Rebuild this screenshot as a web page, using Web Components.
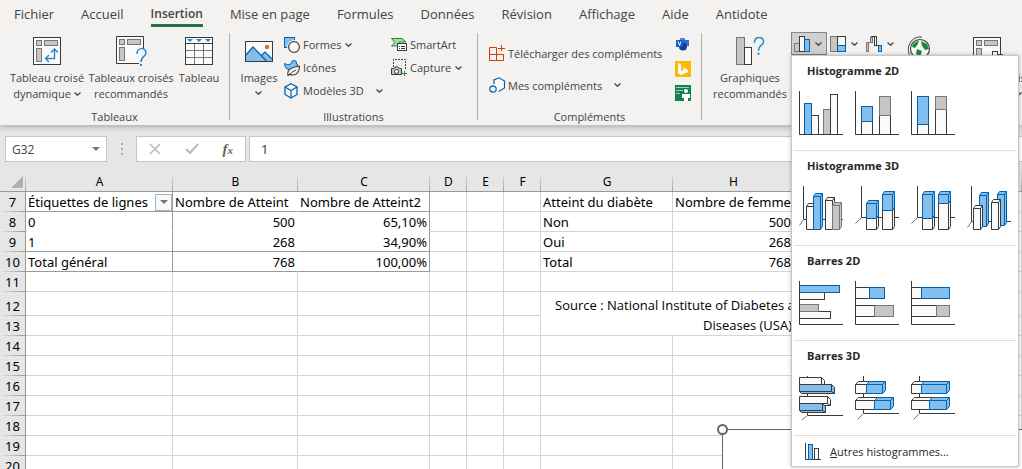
<!DOCTYPE html>
<html lang="fr">
<head>
<meta charset="utf-8">
<title>Classeur – Insertion</title>
<style>
html,body{margin:0;height:100%;overflow:hidden}
body{font-family:"Open Sans","Noto Sans",sans-serif;font-size:11px;color:#444;background:#e6e6e6}
</style>
</head>
<body>
<excel-app></excel-app>
<script>
/* ---------- icon drawing helpers ---------- */
const K = '#3a3a38', BL = '#0063b1', GY = '#797774';
const FILL = {b:['#83beec',BL], g:['#c8c6c4',GY], w:['#fafafa',K]};
const rect = (c,x,y,x2,y2) => `<rect x="${x}" y="${y}" width="${x2-x}" height="${y2-y}" fill="${FILL[c][0]}" stroke="${FILL[c][1]}"/>`;
const line = (d,s=K,w=1) => `<path d="${d}" fill="none" stroke="${s}" stroke-width="${w}"/>`;
/* upright or lying box seen from the front with its top and right faces */
const box = (c,x,y,x2,y2,dx,dy) => {
  const [f,s] = FILL[c];
  return `<path d="M${x} ${y}l${dx} ${-dy}H${x2+dx}V${y2-dy}L${x2} ${y2}H${x}Z" fill="${f}" stroke="${s}"/>` +
         `<path d="M${x} ${y}H${x2}V${y2}M${x2} ${y}l${dx} ${-dy}" fill="none" stroke="${s}"/>`;
};
/* lying box whose shaded edge drops to the lower right */
const slab = (c,x,y,x2,y2) => `<path d="M${x} ${y}H${x2}l3 3V${y2+2}H${x+2}L${x} ${y2}Z" fill="${c==='b'?'#83beec':'#fafafa'}" stroke="${K}"/><path d="M${x} ${y2}H${x2}V${y}M${x2} ${y2}l3 2" fill="none" stroke="${K}"/>`;
const axis = line('M.5 0V43.5H44');
const pivot = `<rect x=".5" y=".5" width="27" height="27" fill="#fafafa" stroke="${K}"/>` +
  rect('g',3.5,3.5,8.5,8.5) + rect('g',11.5,3.5,24.5,8.5) + rect('g',3.5,11.5,8.5,24.5);
const question = (x,y) => `<path d="M${x} ${y+5}C${x} ${y-2} ${x+9} ${y-2} ${x+9} ${y+4}C${x+9} ${y+8} ${x+4} ${y+7} ${x+4} ${y+13}" fill="none" stroke="#1e8bcd" stroke-width="1.5"/><rect x="${x+3}" y="${y+15}" width="2" height="2" fill="#1e8bcd"/>`;

const ICONS = {
  chevron:[7,4,line('M.5.5L3.5 3.2L6.5.5','#444',1.3)],
  arrow:[8,4,'<path d="M0 0H8L4 4Z" fill="#777"/>'],
  pivot:[28,28,pivot+line('M13 21.5H21.5V12M16 18L12.5 21.5L16 25M18 15.5L21.5 12L25 15.5','#1e8bcd',1.4)],
  pivotq:[31,30,`<path d="M27.5 12V.5H.5V27.5H23" fill="#fafafa" stroke="${K}"/>`+rect('g',3.5,3.5,8.5,8.5)+rect('g',11.5,3.5,24.5,8.5)+rect('g',3.5,11.5,8.5,24.5)+question(21,13)],
  table:[28,28,rect('w',.5,.5,27.5,27.5)+line('M.5 6.5H27.5')+line('M1 13.5H27M1 20.5H27M9.5 7V27M18.5 7V27',GY)+'<path d="M2 2H8L5 5ZM11 2H17L14 5ZM20 2H26L23 5Z" fill="#1e8bcd"/>'],
  image:[28,21,`<rect x=".5" y=".5" width="27" height="20" fill="#fafafa" stroke="${K}"/><path d="M1 14L8 6L21.500 20H1Z" fill="#83beec"/><path d="M16 15L20 11L27 18V20H21Z" fill="#83beec"/>`+line('M1 14L8 6L21.5 20M16 15L20 11L27 18',BL,1.2)+'<circle cx="22" cy="6" r="2.200" fill="#e8700a"/>'],
  shapes:[16,16,rect('b',.5,.5,10.5,10.5)+'<circle cx="10" cy="10" r="7" fill="#f3f2f1"/><circle cx="10" cy="10" r="5.400" fill="#fafafa" stroke="#444" stroke-width="1.200"/>'],
  icons:[16,16,`<path d="M.5 3.500Q4 6 7 4Q7 .5 10 .5Q13 .5 12.500 4L14 5Q12 7 10 8L5 10Q1 9 .5 3.500Z" fill="#83beec" stroke="${BL}"/><path d="M4 16Q3 10 7 8.500Q10 7 15.500 6Q15 15 9 15Q7 15 6 14Z" fill="#f3f2f1" stroke="#444" stroke-width="1.200"/>`+line('M4 16Q7 12 12 10','#444')],
  cube:[14,16,`<path d="M7 .8L13 4V11.500L7 15L1 11.500V4Z" fill="#fafafa" stroke="${BL}" stroke-width="1.300"/>`+line('M1 4L7 7.500L13 4M7 7.500V15',BL,1.2)],
  smartart:[16,13,`<path d="M.5.5H11L15 4H8V8H.5L4 4.500Z" fill="#a3dca9" stroke="#1d8a3a"/><rect x="6.500" y="5.500" width="9" height="7" fill="#fafafa" stroke="${K}"/>`+line('M8 8.500H9M10 8.500H14M8 10.500H9M10 10.500H14')],
  capture:[17,17,line('M2.5 8V.5H14.500V10','#444').replace('/>',' stroke-dasharray="2 1"/>')+`<path d="M.5 9.500H3L4 8H7L8 9.500H10.500V15.500H.5Z" fill="#c8c6c4" stroke="${K}"/><circle cx="5.500" cy="12.500" r="2" fill="#fafafa" stroke="${K}"/>`+line('M11 14.500H16M13.500 12V17','#1d8a3a')],
  addin:[16,16,line('M.5 2.500H7.500V15.500H.5ZM.5 9.500H14.500V15.500H.5M12.500 0V6M9 3.500H16','#d83b01')],
  myaddin:[17,17,`<path d="M9 .8L15.500 4V11L9.500 14.500L5 12V3Z" fill="#fafafa"/>`+line('M5 7V3L10 .8L15.500 4V11L9.500 14.500',BL,1.2)+`<circle cx="4" cy="12" r="3.200" fill="#f3f2f1" stroke="${BL}" stroke-width="1.200"/>`],
  visio:[16,14,'<rect x="5" y="1" width="5" height="5" fill="#3b8de0"/><path d="M8 3H14V9H8Z" fill="#2b6fd0"/><circle cx="8" cy="9.500" r="4" fill="#103f91"/><rect x="1" y="3" width="7" height="7" fill="#185abd"/><path d="M3 4.500L4.500 8.500L6 4.500" fill="none" stroke="#fff"/>'],
  bing:[16,16,'<rect width="16" height="16" fill="#ffb900"/><path d="M3 2L6 3V10L9 9L7 6L13 9V11L6 14L3 12Z" fill="#fff"/>'],
  people:[16,16,'<rect width="16" height="16" fill="#13804f"/><path d="M1 2.500H14M1 5.500H8M1 8.500H5" stroke="#9fd0b8" fill="none"/><circle cx="11" cy="6" r="2" fill="#fff"/><path d="M7 9H15V13H13V16H9V13H7Z" fill="#fff"/>'],
  reco:[29,28,rect('g',.5,.5,8.5,27.5)+rect('w',8.5,10.5,15.5,27.5)+question(18.5,.8)],
  column:[16,16,rect('g',.5,7.5,5.5,15.5)+rect('w',5.5,.5,10.5,15.5)+rect('b',10.5,3.5,15.5,15.5)],
  tree:[16,16,rect('g',.5,.5,7.5,15.5)+rect('w',7.5,.5,15.5,9.5)+rect('b',7.5,9.5,15.5,15.5)],
  waterfall:[16,16,rect('g',.5,6.5,2.5,15.5)+rect('g',4.5,1.5,6.5,6.5)+rect('w',8.5,.5,10.5,9.5)+rect('b',12.5,9.5,15.5,15.5)+line('M2.500 6.500H5',GY)+line('M5 .5H9M10 9.500H13')],
  globe:[24,24,'<circle cx="13" cy="13" r="9.500" fill="#fafafa" stroke="#444" stroke-width="1.200"/><path d="M6 8L12 4L11 8L8 12L5 11ZM14 5L20 8L22 13L18 14L15 10ZM10 13L15 15L13 21L9 18Z" fill="#1d8a3a"/><path d="M4 22Q-1 14 3 7T15 1" fill="none" stroke="#444"/>'],
  pivotchart:[30,28,pivot+rect('w',19.5,14.5,24.5,27.5)+rect('b',24.5,17.5,29.5,27.5)],
  cross:[12,12,line('M1 1L11 11M11 1L1 11','#bbb',1.6)],
  check:[14,12,line('M1 6L5 10L13 1','#bbb',2.2)],
  c2a:[44,44,rect('w',12.5,24.5,19.5,43.5)+rect('b',5.5,12.5,12.5,43.5)+rect('g',24.5,18.5,31.5,43.5)+rect('w',31.5,3.5,38.5,43.5)+axis],
  c2b:[44,44,rect('w',6.5,30.5,17.5,43.5)+rect('b',6.5,15.5,17.5,30.5)+rect('w',24.5,24.5,35.5,43.5)+rect('g',24.5,5.5,35.5,24.5)+axis],
  c2c:[44,44,rect('w',6.5,33.5,17.5,43.5)+rect('b',6.5,5.5,17.5,33.5)+rect('w',24.5,18.5,35.5,43.5)+rect('g',24.5,5.5,35.5,18.5)+axis],
  c3a:[44,44,line('M4.500 0V33.500H44')+line('M4.500 33.500L.5 39.500',GY)+box('w',7.5,20.5,14.5,43.5,2,3)+box('b',14.5,10.5,21.5,43.5,2,3)+box('w',26.5,14.5,33.5,43.5,2,3)+box('g',33.5,19.5,40.5,43.5,2,3)],
  c3b:[44,44,line('M6.500 0V31.500H44')+line('M6.500 31.500L.5 37.500',GY)+box('w',11.5,32.5,21.5,43.5,2,3)+box('b',11.5,17.5,21.5,32.5,2,3)+box('w',27.5,24.5,37.5,43.5,2,3)+box('b',27.5,8.5,37.5,24.5,2,3)],
  c3c:[44,44,line('M6.500 0V31.500H44')+line('M6.500 31.500L.5 37.500',GY)+box('w',11.5,32.5,21.5,43.5,2,3)+box('b',11.5,8.5,21.5,32.5,2,3)+box('w',27.5,17.5,37.5,43.5,2,3)+box('b',27.5,8.5,37.5,17.5,2,3)],
  c3d:[44,44,line('M4.500 0V35.500H44')+line('M4.500 35.500L.5 41.500',GY)+box('b',12.5,9.5,19.5,40.5,2,3)+box('w',6.5,22.5,13.5,43.5,2,3)+box('b',30.5,8.5,37.5,39.5,2,3)+box('w',24.5,16.5,31.5,43.5,2,3)],
  b2a:[44,44,rect('w',.5,11.5,25.5,18.5)+rect('b',.5,4.5,40.5,11.5)+rect('w',.5,30.5,31.5,37.5)+rect('g',.5,23.5,19.5,30.5)+axis],
  b2b:[44,44,rect('w',.5,6.5,14.5,17.5)+rect('b',14.5,6.5,29.5,17.5)+rect('w',.5,24.5,19.5,35.5)+rect('g',19.5,24.5,38.5,35.5)+axis],
  b2c:[44,44,rect('w',.5,6.5,10.5,17.5)+rect('b',10.5,6.5,38.5,17.5)+rect('w',.5,24.5,25.5,35.5)+rect('g',25.5,24.5,38.5,35.5)+axis],
  b3a:[44,44,line('M8.500 0V39.500H44')+line('M8.500 39.500L2.500 44',GY)+slab('w',.5,1.5,22.5,8.5)+slab('b',.5,8.5,32.5,15.5)+slab('w',.5,20.5,28.5,27.5)+slab('b',.5,27.5,23.5,34.5)],
  b3b:[44,44,line('M8.500 0V37.500H44')+line('M8.500 37.500L2.500 43.500',GY)+box('w',.5,8.5,11.5,17.5,3,3)+box('b',11.5,8.5,27.5,17.5,3,3)+box('w',.5,24.5,19.5,33.5,3,3)+box('b',19.5,24.5,35.5,33.5,3,3)],
  b3c:[44,44,line('M8.500 0V37.500H44')+line('M8.500 37.500L2.500 43.500',GY)+box('w',.5,8.5,10.5,17.5,3,3)+box('b',10.5,8.5,35.5,17.5,3,3)+box('w',.5,24.5,18.5,33.5,3,3)+box('b',18.5,24.5,35.5,33.5,3,3)],
  more:[16,17,line('M.5 0V16.500H16')+rect('b',3.5,1.5,7.5,16.5)+rect('w',9.5,5.5,13.5,16.5)]
};

const define = (name, html) => customElements.define(name, class extends HTMLElement {
  connectedCallback(){
    if (this.shadowRoot) return;
    this.attachShadow({mode:'open'}).innerHTML = typeof html === 'function' ? html(this) : html;
  }
});

const RESET = 'button{font:inherit;color:inherit;background:none;border:0;margin:0;padding:0;text-align:inherit}';

define('app-icon', el => {
  const [w,h,body] = ICONS[el.getAttribute('name')];
  return `<style>:host{display:inline-block;flex:none;line-height:0}svg{display:block}</style>
  <svg width="${w}" height="${h}" viewBox="0 0 ${w} ${h}" aria-hidden="true">${body}</svg>`;
});

define('ribbon-tabs', () => {
  const tabs = ['Fichier','Accueil','Insertion','Mise en page','Formules','Données','Révision','Affichage','Aide','Antidote'];
  return `<style>${RESET}
  :host{display:block}
  nav{display:flex;gap:27px;box-sizing:border-box;padding:4px 14px 0;height:26px;font-size:13px;line-height:20px}
  button{white-space:nowrap;border-bottom:3px solid transparent;height:23px}
  button[aria-selected=true]{font-size:12px;font-weight:600;border-color:#217346}
  </style><nav role="tablist">${tabs.map(t=>`<button role="tab" aria-selected="${t==='Insertion'}">${t}</button>`).join('')}</nav>`;
});

define('ribbon-group', el => `<style>
  :host{display:flex;flex-direction:column;flex:none;box-sizing:border-box;height:87px;border-right:1px solid #b3b0ad;width:var(--w,auto)}
  div{flex:1;display:flex;min-height:0}
  footer{text-align:center;line-height:16px;height:16px;margin:-4px 0 -5px}
  </style><div><slot></slot></div><footer>${el.getAttribute('label')||''}</footer>`);

define('big-button', el => `<style>${RESET}
  :host{display:block;flex:none;width:var(--w)}
  button{display:flex;flex-direction:column;align-items:center;width:100%;padding-top:4px}
  .i{height:28px;margin-bottom:5px;display:flex;align-items:center}
  .t{line-height:16px;white-space:nowrap;text-align:center}
  </style><button><span class="i"><app-icon name="${el.getAttribute('icon')}"></app-icon></span><span class="t"><slot></slot></span></button>`);

define('small-button', el => `<style>${RESET}
  :host{display:block}
  button{display:flex;align-items:center;height:var(--h,23px);white-space:nowrap}
  .i{width:19px;display:flex}
  .c{display:flex;margin-left:var(--cg,4px)}
  </style><button><span class="i"><app-icon name="${el.getAttribute('icon')}"></app-icon></span><slot></slot>${el.hasAttribute('menu')?'<span class="c"><app-icon name="chevron"></app-icon></span>':''}</button>`);

define('menu-section', el => `<style>${RESET}
  :host{display:block;height:95px;box-sizing:border-box}
  h3{margin:0;padding:6px 15px 0;font-size:11px;line-height:18px;font-weight:700;color:#262626}
  div{display:flex;gap:12px;padding:11px 7px 0}
  button{display:flex}
  hr{margin:15px 2px 0;border:0;height:1px;background:#e1dfdd}
  </style><h3>${el.getAttribute('label')}</h3><div role="group">${el.getAttribute('icons').split(' ').map((n,i)=>`<button role="menuitem" aria-label="${el.getAttribute('label')} ${i+1}"><app-icon name="${n}"></app-icon></button>`).join('')}</div><hr>`);

define('chart-menu', `<style>${RESET}
  :host{display:block;box-sizing:border-box;width:228px;background:#fff;border:1px solid #c6c6c6;box-shadow:0 0 4px rgba(0,0,0,.25);color:#262626}
  .more{display:flex;align-items:center;gap:9px;height:30px;padding-left:13px;white-space:nowrap;width:100%}
  </style>
  <menu-section label="Histogramme 2D" icons="c2a c2b c2c"></menu-section>
  <menu-section label="Histogramme 3D" icons="c3a c3b c3c c3d"></menu-section>
  <menu-section label="Barres 2D" icons="b2a b2b b2c"></menu-section>
  <menu-section label="Barres 3D" icons="b3a b3b b3c"></menu-section>
  <button class="more"><app-icon name="more"></app-icon><span><u>A</u>utres histogrammes...</span></button>`);

define('chart-picker', `<style>${RESET}
  :host{display:flex;flex:none;position:relative;z-index:5;margin-top:-1px;height:24px}
  button{display:flex;align-items:center;gap:5px;box-sizing:border-box;width:36px;height:23px;padding-left:2px;border:1px solid transparent}
  button.on{background:#d2d0ce;border-color:#8a8886}
  chart-menu{position:absolute;top:23px;left:0}
  </style>
  <button class="on" aria-label="Histogramme" aria-expanded="true"><app-icon name="column"></app-icon><app-icon name="chevron"></app-icon></button>
  <button aria-label="Hiérarchie"><app-icon name="tree"></app-icon><app-icon name="chevron"></app-icon></button>
  <button aria-label="Cascade"><app-icon name="waterfall"></app-icon><app-icon name="chevron"></app-icon></button>
  <chart-menu></chart-menu>`);

define('excel-ribbon', `<style>${RESET}
  :host{display:block;background:#f3f2f1;position:relative;z-index:3;box-shadow:0 2px 6px rgba(0,0,0,.25)}
  .body{display:flex;height:92px;padding-top:7px}
  .col{display:flex;flex-direction:column;flex:none}
  .apps{gap:8px;padding-top:4px;margin-left:auto;margin-right:10px}
  .apps button{display:flex;height:16px}
  .map{display:flex;align-items:flex-start;margin-left:8px;padding-top:3px;width:26px}
  </style>
  <ribbon-tabs></ribbon-tabs>
  <div class="body">
    <ribbon-group label="Tableaux" style="--w:230px">
      <big-button icon="pivot" style="--w:78px;margin-left:8px">Tableau croisé<br>dynamique <app-icon name="chevron" style="vertical-align:2px"></app-icon></big-button>
      <big-button icon="pivotq" style="--w:90px">Tableaux croisés<br>recommandés</big-button>
      <big-button icon="table" style="--w:46px">Tableau</big-button>
    </ribbon-group>
    <ribbon-group label="Illustrations" style="--w:248px">
      <big-button icon="image" style="--w:42px;margin-left:8px">Images<br><app-icon name="chevron" style="vertical-align:3px"></app-icon></big-button>
      <div class="col" style="width:107px;margin-left:4px">
        <small-button icon="shapes" menu>Formes</small-button>
        <small-button icon="icons">Icônes</small-button>
        <small-button icon="cube" menu style="--cg:12px">Modèles 3D</small-button>
      </div>
      <div class="col">
        <small-button icon="smartart">SmartArt</small-button>
        <small-button icon="capture" menu>Capture</small-button>
      </div>
    </ribbon-group>
    <ribbon-group label="Compléments" style="--w:224px">
      <div class="col" style="margin-left:11px;padding-top:4px">
        <small-button icon="addin" style="--h:32px">Télécharger des compléments</small-button>
        <small-button icon="myaddin" menu style="--h:32px;--cg:12px">Mes compléments</small-button>
      </div>
      <div class="col apps">
        <button aria-label="Visio"><app-icon name="visio"></app-icon></button>
        <button aria-label="Bing"><app-icon name="bing"></app-icon></button>
        <button aria-label="Graphique de personnes"><app-icon name="people"></app-icon></button>
      </div>
    </ribbon-group>
    <big-button icon="reco" style="--w:80px;margin-left:8px;margin-right:1px">Graphiques<br>recommandés</big-button>
    <chart-picker></chart-picker>
    <button class="map" aria-label="Cartes"><app-icon name="globe"></app-icon></button>
    <big-button icon="pivotchart" style="--w:100px;margin-left:7px">Graphique croisé<br>dynamique <app-icon name="chevron" style="vertical-align:2px"></app-icon></big-button>
  </div>`);

define('formula-bar', `<style>${RESET}
  :host{display:flex;align-items:center;padding:11px 0 10px 5px;height:26px;flex:none}
  .box{display:flex;align-items:center;box-sizing:border-box;height:26px;background:#fff;border:1px solid #c6c6c6}
  .box button{display:flex}
  .name{width:102px;padding-right:6px}
  input{font:inherit;font-size:12px;color:#444;border:0;outline:0;background:none;padding:0 0 0 6px;min-width:0;flex:1;height:22px}
  .dots{display:flex;flex-direction:column;gap:3px;margin:0 13px 0 14px}
  .dots i{width:2px;height:2px;background:#aaa}
  .acts{width:110px;justify-content:space-between;padding:0 12px;margin-right:3px}
  .fx{font:italic 700 15px "Liberation Serif",serif;color:#666;line-height:18px}
  .fx sub{font-size:11px;vertical-align:baseline}
  .value{flex:1;border-right:0}
  .value input{padding-left:11px;font-size:13px;font-family:"Noto Sans",sans-serif}
  </style>
  <div class="box name"><input aria-label="Zone Nom" value="G32"><button aria-label="Liste des noms"><app-icon name="arrow"></app-icon></button></div>
  <div class="dots"><i></i><i></i><i></i></div>
  <div class="box acts"><button aria-label="Annuler"><app-icon name="cross"></app-icon></button><button aria-label="Entrer"><app-icon name="check"></app-icon></button><button class="fx" aria-label="Insérer une fonction"><span>f<sub>x</sub></span></button></div>
  <div class="box value"><input aria-label="Barre de formule" value="1"></div>`);

define('sheet-grid', () => {
  const cols = {A:147,B:125,C:132,D:37,E:37,F:37,G:132,H:121,I:161,J:0};
  const data = {
    7:{A:'Étiquettes de lignes',B:'Nombre de Atteint',C:'Nombre de Atteint2',G:'Atteint du diabète',H:'Nombre de femmes'},
    8:{A:'0',B:'500',C:'65,10%',G:'Non',H:'500'},
    9:{A:'1',B:'268',C:'34,90%',G:'Oui',H:'268'},
    10:{A:'Total général',B:'768',C:'100,00%',G:'Total',H:'768'}
  };
  let rows = '';
  for (let r=7;r<=20;r++){
    rows += `<tr${r===12?' class="tall"':''}><th scope="row">${r}</th>`;
    for (const c in cols){
      if (r===12&&c==='G'){rows+='<td class="src" colspan="3" rowspan="2">Source : National Institute of Diabetes and Digestive and Kidney<br>Diseases (USA)</td>';continue}
      if ((r===12||r===13)&&'GHI'.includes(c)) continue;
      const v = (data[r]||{})[c]||'', k=[];
      if (r<=10&&'ABC'.includes(c)){k.push('p');if(c==='B')k.push('nr');if(r===8)k.push('nb')}
      if (r>7&&r<=10&&'BCH'.includes(c)) k.push('num');
      rows += `<td class="${k.join(' ')}">${r===7&&c==='A'?`<span class="f">${v}<button aria-label="Filtrer"><app-icon name="arrow"></app-icon></button></span>`:v}</td>`;
    }
    rows += '</tr>';
  }
  return `<style>${RESET}
  :host{display:block;flex:1;min-height:0;overflow:hidden;position:relative;font-family:"Noto Sans",sans-serif;font-size:13px;color:#000}
  table{table-layout:fixed;border-collapse:separate;border-spacing:0;width:100%;min-width:1000px;background:#fff}
  th,td{box-sizing:border-box;height:20px;line-height:18px;padding:1px 2px 0;border:solid #d4d4d4;border-width:0 1px 1px 0;text-align:left;white-space:nowrap;vertical-align:bottom;font-weight:400}
  tr.tall>*{height:24px}
  thead th{background:linear-gradient(#e6e6e6,#a6a6a6) right/1px 100% no-repeat #e6e6e6;text-align:center;border-right:0;border-bottom-color:#999;font-size:12px}
  tbody th{background:linear-gradient(90deg,#e6e6e6,#999) bottom/100% 1px no-repeat #e6e6e6;border-bottom:0;border-right-color:#999;text-align:center;padding:1px 0}
  .corner svg{display:block;margin-left:auto;margin-right:1px;margin-bottom:3px}
  .p{border-color:#999}.nr{border-right-color:#fff}.nb{border-bottom-color:#fff}
  .p.nb{border-right-color:#999}.p.nr.nb{border-color:#fff}
  .num{text-align:right}
  td.src{text-align:center;line-height:20px;padding:0;font-family:"Open Sans",sans-serif}
  .f{display:flex;align-items:center;justify-content:space-between}
  .f button{box-sizing:border-box;width:17px;height:17px;border:1px solid #a9b4c2;background:#f8f9fb;display:flex;align-items:center;justify-content:center;margin-right:-2px}
  .chart{position:absolute;left:722px;top:257px;right:-40px;height:200px;border:1px solid #666;background:#fff;box-sizing:border-box}
  .chart::before{content:"";position:absolute;left:-6px;top:-6px;width:7px;height:7px;border:2px solid #666;border-radius:50%;background:#fff}
  </style>
  <table><colgroup><col style="width:26px">${Object.values(cols).map(w=>w?`<col style="width:${w}px">`:'<col>').join('')}</colgroup>
  <thead><tr><th class="corner"><svg width="12" height="12" viewBox="0 0 12 12" aria-hidden="true"><path d="M12 0V12H0Z" fill="#b1b1b1"/></svg></th>${Object.keys(cols).map(c=>`<th scope="col">${c}</th>`).join('')}</tr></thead>
  <tbody>${rows}</tbody></table>
  <div class="chart" role="img" aria-label="Graphique"></div>`;
});

define('excel-app', `<style>
  :host{display:flex;flex-direction:column;height:100vh;overflow:hidden}
  </style><excel-ribbon></excel-ribbon><formula-bar></formula-bar><sheet-grid></sheet-grid>`);
</script>
</body>
</html>
